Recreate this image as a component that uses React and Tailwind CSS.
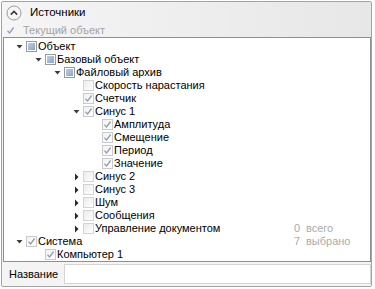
import React from 'react';

// Tree rows of the sources panel
const rows = [
  { level: 0, label: 'Объект', arrow: 'open', state: 'part' },
  { level: 1, label: 'Базовый объект', arrow: 'open', state: 'part' },
  { level: 2, label: 'Файловый архив', arrow: 'open', state: 'part' },
  { level: 3, label: 'Скорость нарастания', arrow: null, state: 'off' },
  { level: 3, label: 'Счетчик', arrow: null, state: 'on' },
  { level: 3, label: 'Синус 1', arrow: 'open', state: 'on' },
  { level: 4, label: 'Амплитуда', arrow: null, state: 'on' },
  { level: 4, label: 'Смещение', arrow: null, state: 'on' },
  { level: 4, label: 'Период', arrow: null, state: 'on' },
  { level: 4, label: 'Значение', arrow: null, state: 'on' },
  { level: 3, label: 'Синус 2', arrow: 'closed', state: 'off' },
  { level: 3, label: 'Синус 3', arrow: 'closed', state: 'off' },
  { level: 3, label: 'Шум', arrow: 'closed', state: 'off' },
  { level: 3, label: 'Сообщения', arrow: 'closed', state: 'off' },
  { level: 3, label: 'Управление документом', arrow: 'closed', state: 'off' },
  { level: 0, label: 'Система', arrow: 'open', state: 'on' },
  { level: 1, label: 'Компьютер 1', arrow: null, state: 'on' },
];

const indent = ['pl-[8px]', 'pl-[27px]', 'pl-[46px]', 'pl-[65px]', 'pl-[84px]'];

const CheckMark = ({ color = '#8fa0b4' }) => (
  <svg width="9" height="9" viewBox="0 0 9 9">
    <path d="M1.5 4.8 L3.6 7 L7.6 1.5" fill="none" stroke={color} strokeWidth="1.3" />
  </svg>
);

const Box = ({ state }) => {
  if (state === 'part') {
    return (
      <div className="w-[11px] h-[11px] border border-[#9a9a9a] bg-white p-[1px] flex">
        <div className="flex-1 bg-gradient-to-br from-[#bcd0e8] to-[#86a5ca]" />
      </div>
    );
  }
  if (state === 'on') {
    return (
      <div className="w-[11px] h-[11px] border border-[#cacaca] bg-gradient-to-br from-[#f2f2f2] to-white flex items-center justify-center">
        <CheckMark />
      </div>
    );
  }
  return <div className="w-[11px] h-[11px] border border-[#d4d4d4] bg-gradient-to-br from-[#ebebeb] to-white" />;
};

const Arrow = ({ kind }) => {
  if (kind === 'open') {
    return (
      <svg width="7" height="5" viewBox="0 0 7 5">
        <path d="M0.5 1 L6.5 1 L3.5 4.5 Z" fill="#3c3c3c" />
      </svg>
    );
  }
  if (kind === 'closed') {
    return (
      <svg width="5" height="8" viewBox="0 0 5 8">
        <path d="M1 0.5 L4.5 4 L1 7.5 Z" fill="#2a2a2a" />
      </svg>
    );
  }
  return null;
};

const TreeRow = ({ row }) => (
  <div className={`h-[13px] flex items-center ${indent[row.level]}`}>
    <div className="w-[14px] flex justify-center">
      <Arrow kind={row.arrow} />
    </div>
    <Box state={row.state} />
    <span className="ml-[1px] leading-[13px] whitespace-nowrap">{row.label}</span>
  </div>
);

export default function App() {
  return (
    <div className="w-[375px] h-[289px] bg-white pt-[1px] pl-[1px] font-['Liberation_Sans',sans-serif] text-[11px] text-black">
      <div className="w-[371px] h-[286px] border border-[#a3a3a3] rounded-[2px] flex flex-col bg-[#f2f2f2] overflow-hidden">
        {/* header and current object line */}
        <div className="h-[35px] bg-gradient-to-r from-[#f5f5f5] to-[#e7e7e7] flex flex-col">
          <div className="h-[21px] flex items-center pl-[4px] gap-[8px]">
            <svg width="16" height="16" viewBox="0 0 16 16">
              <circle cx="8" cy="8" r="7" fill="#f7f7f7" stroke="#9a9a9a" />
              <path d="M4.8 9.6 L8 6.4 L11.2 9.6" fill="none" stroke="#3a3a3a" strokeWidth="1.5" />
            </svg>
            <span className="text-[11.5px]">Источники</span>
          </div>
          <div className="h-[14px] flex items-center pl-[4px] gap-[8px] text-[#a4a4a4]">
            <CheckMark color="#8aa0c0" />
            <span className="leading-[14px]">Текущий объект</span>
          </div>
        </div>
        {/* tree */}
        <div className="h-[225px] ml-[1px] border border-[#8c8f96] bg-white flex">
          <div className="flex-1 pt-[2px]">
            {rows.map((row, i) => (
              <TreeRow row={row} key={i} />
            ))}
          </div>
          <div className="w-[78px] flex flex-col justify-end pb-[13px] text-[#aaaaaa] text-[11px] leading-[13px]">
            <div className="flex"><span className="w-[14px] pl-[2px]">0</span><span>всего</span></div>
            <div className="flex"><span className="w-[14px] pl-[2px]">7</span><span>выбрано</span></div>
          </div>
        </div>
        {/* name filter */}
        <div className="flex-1 flex items-center pl-[7px] bg-[#f4f4f4]">
          <span className="w-[55px]">Название</span>
          <div className="flex-1 h-[20px] border border-[#d4d4d4] bg-white" />
        </div>
      </div>
    </div>
  );
}
